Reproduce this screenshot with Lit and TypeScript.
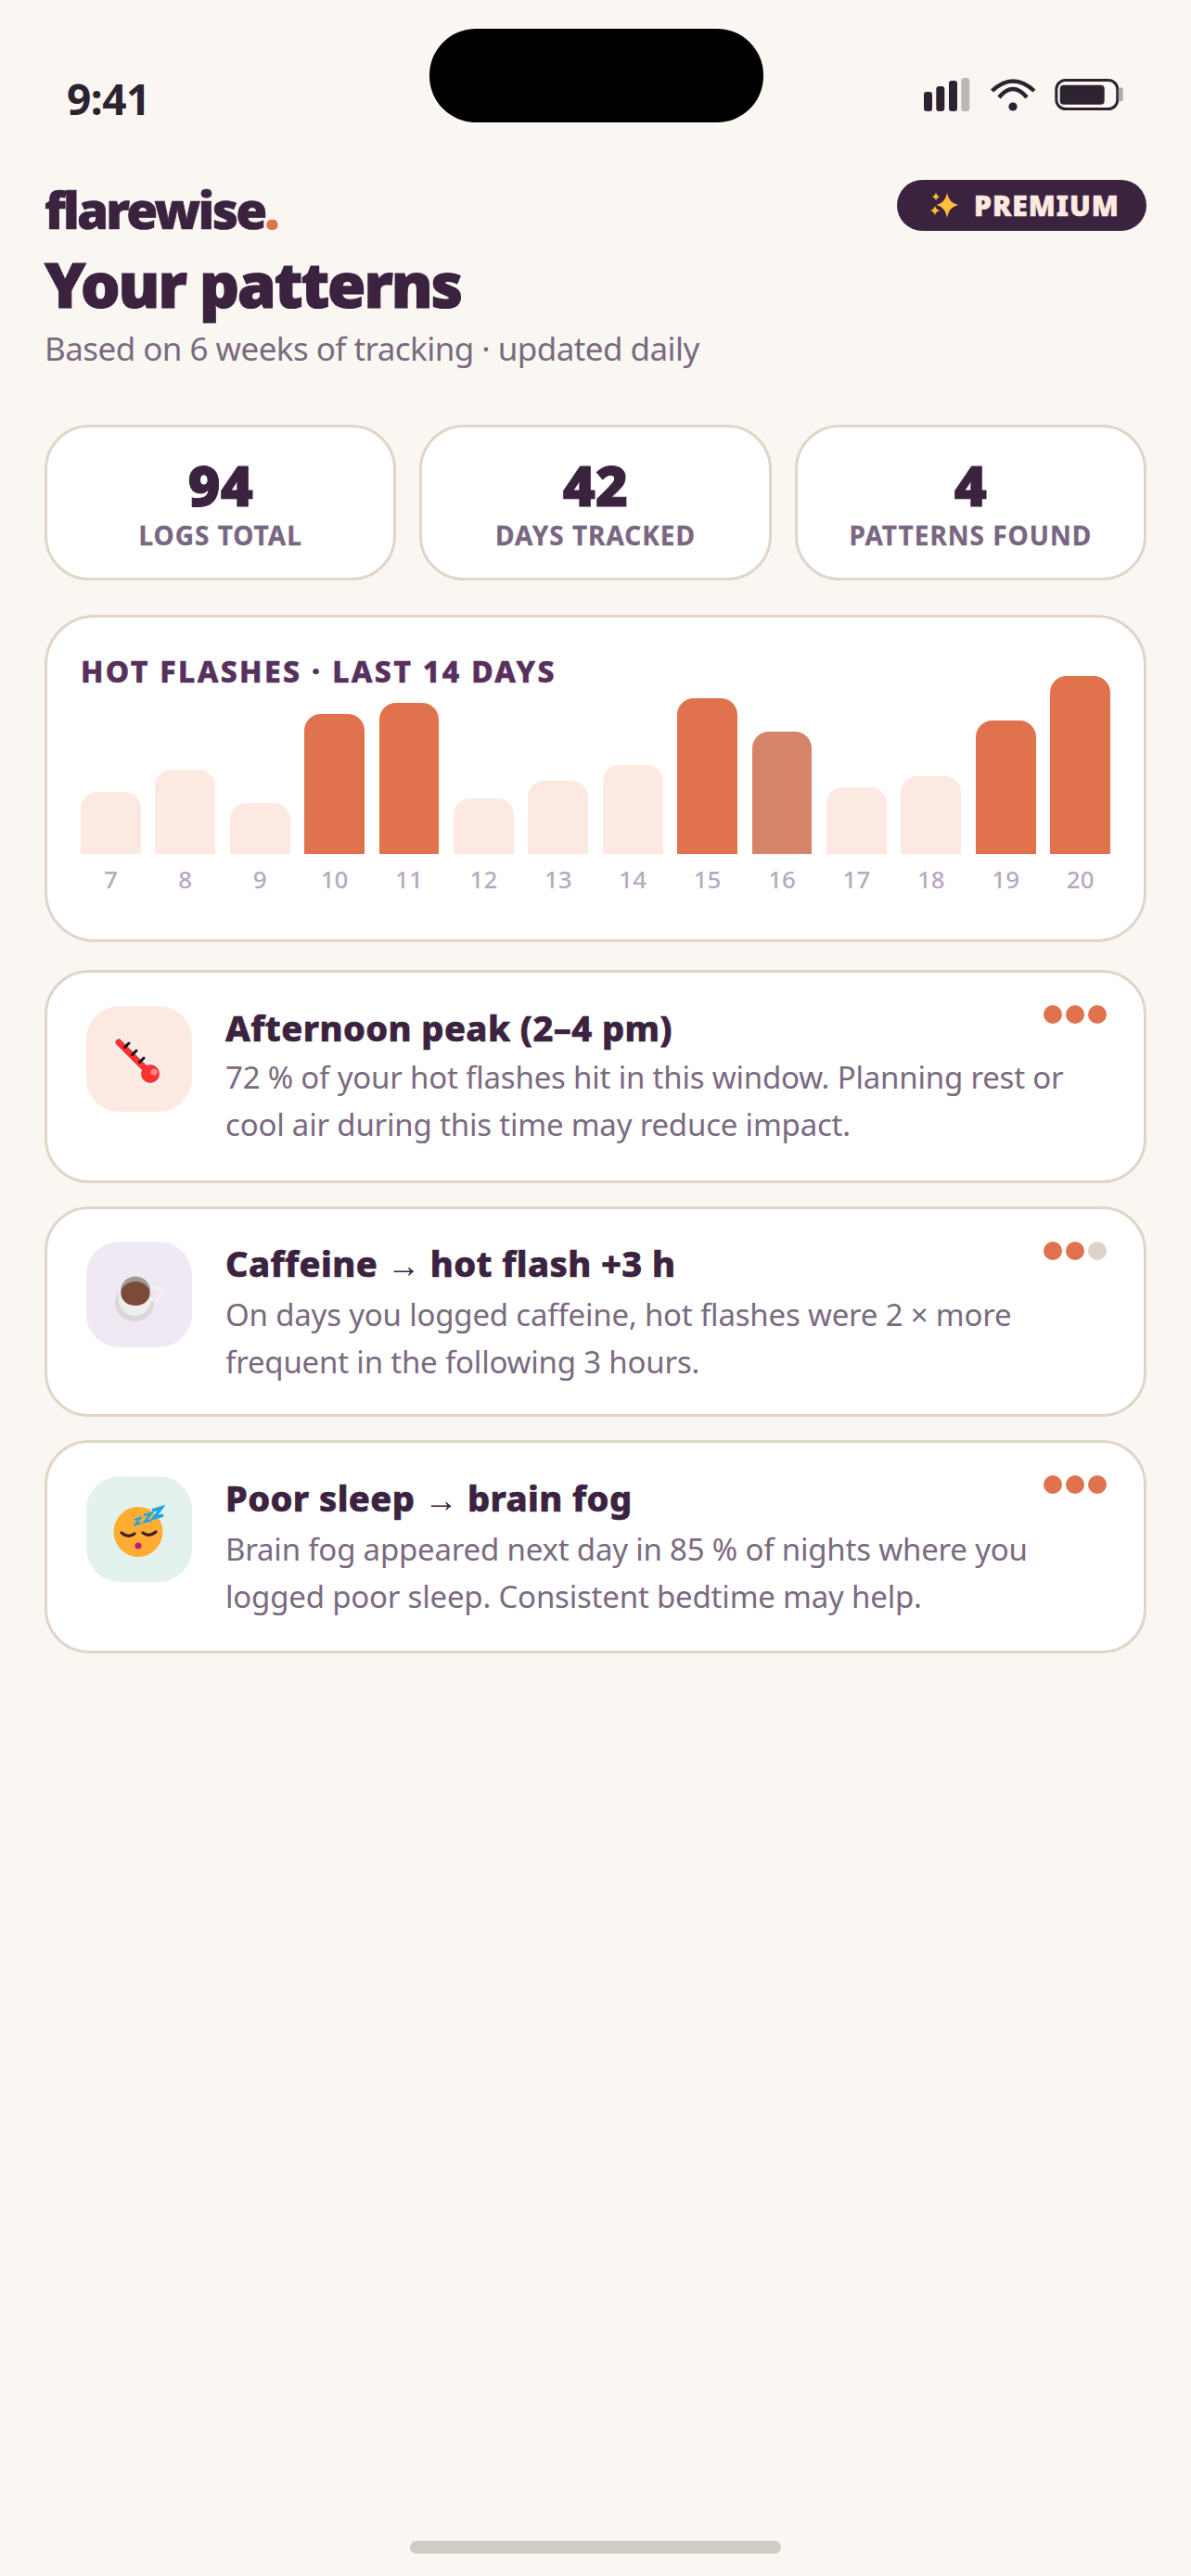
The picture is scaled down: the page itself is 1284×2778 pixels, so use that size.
import { LitElement, html, css, svg } from "lit";
import { customElement } from "lit/decorators.js";

const bars = [
  [7, 67, "l"], [8, 91, "l"], [9, 55, "l"], [10, 151, "h"], [11, 163, "h"], [12, 60, "l"], [13, 79, "l"],
  [14, 96, "l"], [15, 168, "h"], [16, 132, "m"], [17, 72, "l"], [18, 84, "l"], [19, 144, "h"], [20, 192, "h"],
] as const;

const thermo = svg`
  <line x1="35" y1="39" x2="69" y2="73" stroke="#f0f0f3" stroke-width="14" stroke-linecap="round"/>
  <circle cx="69" cy="73" r="13" fill="#f0f0f3"/>
  <line x1="35" y1="39" x2="69" y2="73" stroke="#ff3030" stroke-width="7" stroke-linecap="round"/>
  <circle cx="69" cy="73" r="10" fill="#ff3030"/>
  <circle cx="73" cy="71" r="3.6" fill="#ff8c8c"/>
  <g stroke="#111" stroke-width="3" stroke-linecap="round">
    <line x1="41.5" y1="44.5" x2="46" y2="40"/><line x1="49.5" y1="52.5" x2="54" y2="48"/><line x1="57.5" y1="60.5" x2="62" y2="56"/>
  </g>`;

const coffee = svg`
  <ellipse cx="52" cy="66" rx="21" ry="20" fill="#d8d8d8"/>
  <circle cx="74" cy="56" r="7" fill="none" stroke="#f1f1f1" stroke-width="4"/>
  <path d="M35 52 C35 42 43 36 53 36 C63 36 70 42 70 52 L70 62 C70 72 62 80 53 80 C43 80 35 72 35 62Z" fill="#eeeeee"/>
  <ellipse cx="53" cy="53" rx="16" ry="15.5" fill="#9b9b9b"/>
  <ellipse cx="53" cy="56" rx="15.5" ry="13" fill="#7c4a38"/>`;

const sleep = svg`
  <ellipse cx="56" cy="60" rx="26.5" ry="27" fill="#ffac33"/>
  <g fill="none" stroke="#3b1f1f" stroke-width="3.2" stroke-linecap="round">
    <path d="M38 61 Q45 67 52 62"/><path d="M61 61 Q68 66 75 60"/>
  </g>
  <circle cx="56" cy="75" r="3.6" fill="#c2187e"/>
  <g fill="none" stroke="#1aa7e8" stroke-linejoin="miter">
    <path d="M52 47 L58 45 L53 52 L59 50.5" stroke-width="2.2"/>
    <path d="M62 42 L70 40 L63 49 L70 47.5" stroke-width="2.6"/>
    <path d="M71 37 L81 34 L73 45 L83 42" stroke-width="3.6"/>
  </g>`;

const insights = [
  { bg: "#fce9e2", icon: thermo, title: ["Afternoon peak (2–4 pm)"], body: "72 % of your hot flashes hit in this window. Planning rest or cool air during this time may reduce impact.", dots: 3 },
  { bg: "#f0e9f4", icon: coffee, title: ["Caffeine ", " hot flash +3 h"], body: "On days you logged caffeine, hot flashes were 2 × more frequent in the following 3 hours.", dots: 2 },
  { bg: "#e4f2ee", icon: sleep, title: ["Poor sleep ", " brain fog"], body: "Brain fog appeared next day in 85 % of nights where you logged poor sleep. Consistent bedtime may help.", dots: 3 },
];

@customElement("app-root")
export class AppRoot extends LitElement {
  static styles = css`
    :host { display: flex; flex-direction: column; width: 1284px; min-height: 2778px; background: #faf7f2; font-family: "Noto Sans", sans-serif; color: #3b2340; }
    .status { display: grid; grid-template-columns: 390px 360px 1fr; padding: 31px 72px 0 72px; height: 134px; box-sizing: border-box; }
    .time { font: 700 46px/1 "Noto Sans", sans-serif; letter-spacing: -0.5px; color: #2d2230; padding-top: 52px; }
    .island { width: 360px; height: 101px; margin-left: 1px; border-radius: 50px; background: #000; }
    .indicators { display: flex; justify-content: flex-end; padding-top: 50px; }
    .indicators svg { display: block; }
    main { display: flex; flex-direction: column; padding: 0 48px; }
    .head { display: flex; justify-content: space-between; align-items: flex-start; padding-top: 60px; height: 60px; }
    .logo { font-size: 55px; font-weight: 900; line-height: 64px; letter-spacing: -2.8px; -webkit-text-stroke: 0.6px #3b2340; }
    .logo span { color: #e0724d; -webkit-text-stroke: 1px #e0724d; }
    .pill { display: flex; align-items: center; gap: 15px; height: 55px; width: 269px; box-sizing: border-box; padding-left: 36px; border-radius: 28px; background: #3b2340; color: #fce9e2; font-size: 30px; font-weight: 900; letter-spacing: 1px; -webkit-text-stroke: 0.6px #fce9e2; }
    h1 { margin: 0; font-size: 67px; font-weight: 900; line-height: 80px; letter-spacing: -2.1px; -webkit-text-stroke: 1.2px #3b2340; padding-top: 12px; }
    .sub { font-size: 35px; line-height: 50px; letter-spacing: -0.55px; color: #7a6a80; margin-top: 5px; }
    .stats { display: grid; grid-template-columns: repeat(3, 1fr); gap: 25px; margin-top: 57px; }
    .card { background: #fff; border: 3px solid #e0d5c8; border-radius: 48px; box-sizing: border-box; }
    .stat { height: 168px; display: flex; flex-direction: column; align-items: center; padding-top: 26px; }
    .num { font-size: 60px; font-weight: 900; line-height: 72px; -webkit-text-stroke: 1px #3b2340; }
    .lbl { font-size: 28px; font-weight: 700; line-height: 36px; color: #7a6682; letter-spacing: 1px; -webkit-text-stroke: 0.3px #7a6682; }
    .chart { height: 353px; margin-top: 37px; padding: 39px 36px 0; border-radius: 54px; }
    .chart h2 { margin: 0 0 -14px; font-size: 32px; font-weight: 800; line-height: 38px; letter-spacing: 2.35px; color: #56315c; -webkit-text-stroke: 0.5px #56315c; }
    .plot { display: grid; grid-template-columns: repeat(14, 1fr); gap: 15.7px; height: 192px; align-items: end; }
    .bar { border-radius: 18px 18px 0 0; }
    .bar.l { background: #fce9e2; }
    .bar.h { background: #e0724d; }
    .bar.m { background: #d5846a; }
    .days { display: grid; grid-template-columns: repeat(14, 1fr); gap: 15.7px; margin-top: 9px; font-size: 26px; line-height: 36px; color: #b9a8c0; text-align: center; font-weight: 500; }
    .list { display: flex; flex-direction: column; gap: 25px; margin-top: 30px; }
    .ins { position: relative; display: flex; gap: 36px; height: 230px; padding: 36px 42px 0 42px; }
    .ins:nth-child(2) { height: 227px; padding-top: 35px; }
    .ico { flex: none; width: 114px; height: 114px; border-radius: 36px; }
    .ico svg { display: block; }
    .ins h3 { margin: -2px 0 0; font-size: 38px; font-weight: 800; line-height: 50px; letter-spacing: 0.4px; -webkit-text-stroke: 0.6px #3b2340; }
    .ins h3 b { font-size: 36px; font-weight: 400; letter-spacing: 0; -webkit-text-stroke: 0; }
    .ins p { margin: 3px 0 0; font-size: 33px; line-height: 51px; letter-spacing: -0.2px; color: #7a6a80; }
    .dots { position: absolute; top: 35px; right: 40px; display: flex; gap: 4px; }
    .dots i { display: block; width: 20px; height: 20px; border-radius: 50%; background: #e0724d; }
    .dots i.off { background: #ddd3c8; }
    .home { margin: auto auto 24px; width: 400px; height: 14px; border-radius: 7px; background: #d0cbc5; }
  `;

  render() {
    return html`
      <div class="status">
        <div class="time">9:41</div>
        <div class="island"></div>
        <div class="indicators">
          <svg width="216" height="40" viewBox="0 0 216 40">
            <g transform="translate(-45 0)" fill="#2d2230">
              <rect x="45" y="18" width="9" height="21" rx="3"/>
              <rect x="58.3" y="12" width="9" height="27" rx="3"/>
              <rect x="72" y="6" width="9" height="33" rx="3"/>
              <rect x="85.3" y="3" width="9" height="36" rx="3" fill="#bdb8b8"/>
              <circle cx="141" cy="34" r="4.6"/>
              <path d="M118.5 17 Q141 -4 164 17 M126 24 Q141 6 156 24" fill="none" stroke="#2d2230" stroke-width="4.4"/>
              <rect x="187.8" y="5.5" width="66" height="31" rx="10" fill="none" stroke="#2d2230" stroke-width="3"/>
              <rect x="191.7" y="10.7" width="48" height="21" rx="4"/>
              <rect x="254.7" y="13.3" width="5" height="15" rx="2" fill="#b0aaaa"/>
            </g>
          </svg>
        </div>
      </div>
      <main>
        <div class="head">
          <div class="logo">flarewise<span>.</span></div>
          <div class="pill">
            <svg width="32" height="30" viewBox="0 0 32 30">
              <path fill="#fdc038" d="M18 1 Q20 12 30 14 Q20 16 18 28 Q16 16 6 14 Q16 12 18 1Z M6 1 Q7 4 10 5 Q7 6 6 9 Q5 6 2 5 Q5 4 6 1Z M5 15 Q6 19 10 20 Q6 21 5 25 Q4 21 0 20 Q4 19 5 15Z"/>
            </svg>
            <span>PREMIUM</span>
          </div>
        </div>
        <h1>Your patterns</h1>
        <div class="sub">Based on 6 weeks of tracking · updated daily</div>
        <div class="stats">
          ${[["94", "LOGS TOTAL"], ["42", "DAYS TRACKED"], ["4", "PATTERNS FOUND"]].map(
            ([n, l]) => html`<div class="card stat"><div class="num">${n}</div><div class="lbl">${l}</div></div>`
          )}
        </div>
        <div class="card chart">
          <h2>HOT FLASHES · LAST 14 DAYS</h2>
          <div class="plot">
            ${bars.map(([, h, k]) => html`<div class="bar ${k}" style="height:${h}px"></div>`)}
          </div>
          <div class="days">${bars.map(([d]) => html`<span>${d}</span>`)}</div>
        </div>
        <div class="list">
          ${insights.map(
            (i) => html`<div class="card ins">
              <div class="ico" style="background:${i.bg}">
                <svg width="114" height="114" viewBox="0 0 114 114">${i.icon}</svg>
              </div>
              <div>
                <h3>${i.title[0]}${i.title.length > 1 ? html`<b>→</b>${i.title[1]}` : ""}</h3>
                <p>${i.body}</p>
              </div>
              <div class="dots">${[0, 1, 2].map((n) => html`<i class=${n < i.dots ? "" : "off"}></i>`)}</div>
            </div>`
          )}
        </div>
      </main>
      <div class="home"></div>
    `;
  }
}
